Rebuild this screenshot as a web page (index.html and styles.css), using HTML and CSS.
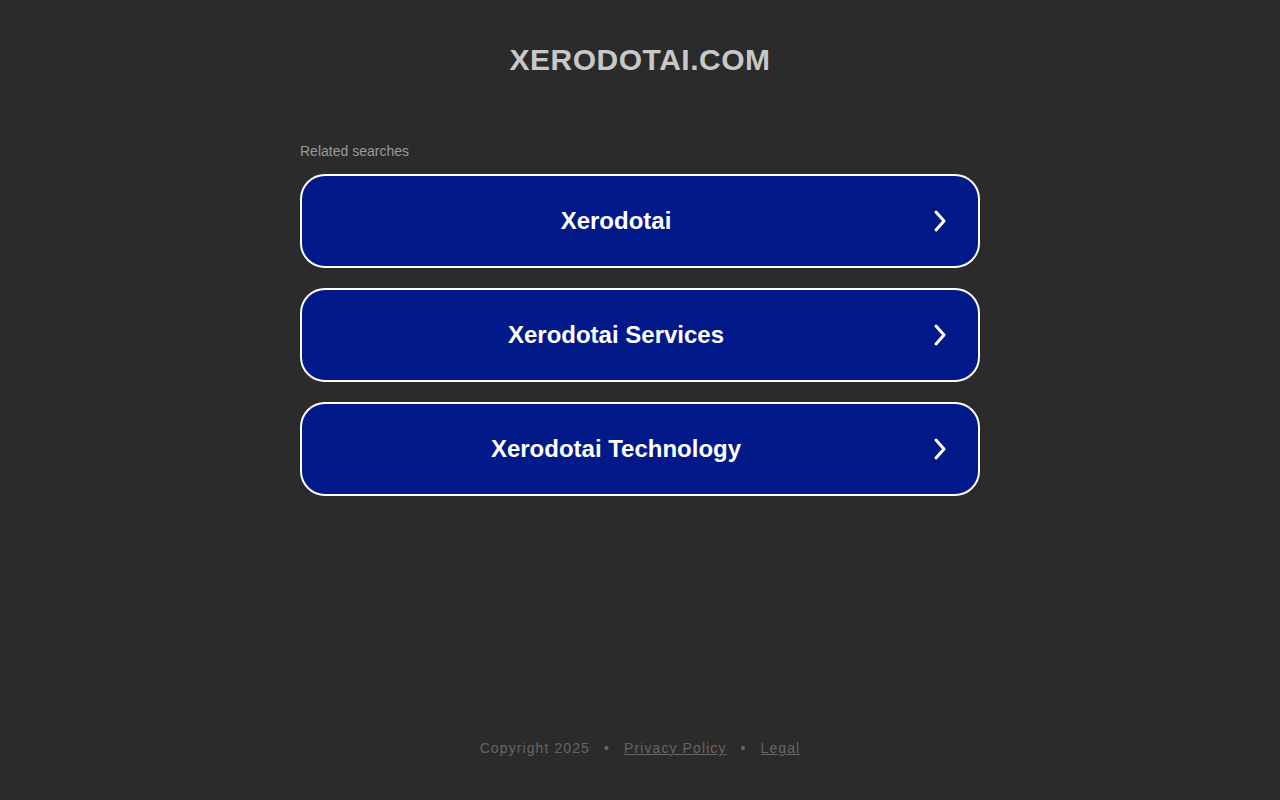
FILE: index.html
```html
<!DOCTYPE html>
<html>
<head>
<meta charset="utf-8">
<link rel="stylesheet" href="styles.css">
</head>
<body>
<div class="page">
  <header class="header"><h1 class="title">XERODOTAI.COM</h1></header>
  <main class="main">
    <p class="related">Related searches</p>
    <div class="list">
      <a class="item" href="#"><span class="label">Xerodotai</span><svg class="arrow" viewBox="0 0 16 24" width="16" height="24"><path d="M4 3 L12 12 L4 21" fill="none" stroke="#fff" stroke-width="3" stroke-linecap="round" stroke-linejoin="round"/></svg></a>
      <a class="item" href="#"><span class="label">Xerodotai Services</span><svg class="arrow" viewBox="0 0 16 24" width="16" height="24"><path d="M4 3 L12 12 L4 21" fill="none" stroke="#fff" stroke-width="3" stroke-linecap="round" stroke-linejoin="round"/></svg></a>
      <a class="item" href="#"><span class="label">Xerodotai Technology</span><svg class="arrow" viewBox="0 0 16 24" width="16" height="24"><path d="M4 3 L12 12 L4 21" fill="none" stroke="#fff" stroke-width="3" stroke-linecap="round" stroke-linejoin="round"/></svg></a>
    </div>
  </main>
  <footer class="footer">
    <span>Copyright 2025</span><span class="dot">•</span><a href="#" class="flink">Privacy Policy</a><span class="dot">•</span><a href="#" class="flink">Legal</a>
  </footer>
</div>
</body>
</html>
```
FILE: styles.css
```css
html, body { margin: 0; padding: 0; }
body {
  background: #2b2b2b;
  font-family: "Liberation Sans", Arial, sans-serif;
  width: 1280px;
  height: 800px;
  overflow: hidden;
}
.page {
  display: flex;
  flex-direction: column;
  align-items: center;
  height: 800px;
}
.header { padding-top: 41px; }
.title {
  margin: 0;
  font-size: 30px;
  font-weight: bold;
  color: #c8c8c8;
  letter-spacing: 0.5px;
  line-height: 38px;
}
.main {
  width: 680px;
  margin-top: 64px;
}
.related {
  margin: 0 0 15px 0;
  font-size: 14px;
  line-height: 16px;
  color: #9a9a9a;
}
.list {
  display: flex;
  flex-direction: column;
  gap: 20px;
}
.item {
  display: flex;
  align-items: center;
  height: 94px;
  box-sizing: border-box;
  border: 2px solid #fff;
  border-radius: 25px;
  background: #011989;
  text-decoration: none;
  padding-right: 30px;
}
.label {
  flex: 1;
  text-align: center;
  color: #fff;
  font-size: 24px;
  font-weight: bold;
  padding-right: 2px;
}
.arrow { display: block; }
.footer {
  margin-top: auto;
  margin-bottom: 44px;
  font-size: 14px;
  letter-spacing: 1.1px;
  color: #666;
  line-height: 16px;
}
.dot { margin: 0 14px; }
.flink { color: #666; text-decoration: underline; }
```
